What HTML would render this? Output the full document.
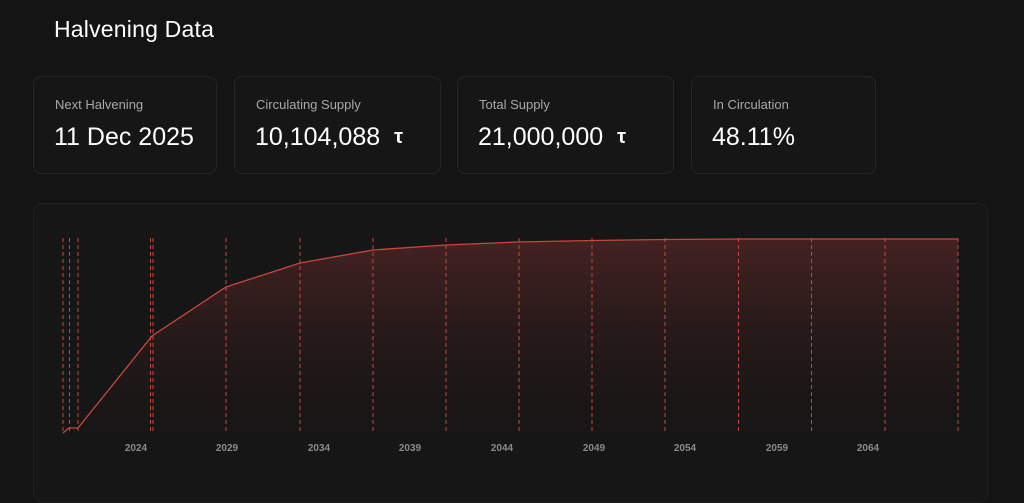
<!DOCTYPE html>
<html><head><style>
body{margin:0;width:1024px;height:482px;background:#141414;font-family:"Liberation Sans",sans-serif;color:#fff;overflow:hidden;position:relative}
h1{position:absolute;left:54px;top:16px;margin:0;font-size:23px;font-weight:400;letter-spacing:0.2px}
.card{position:absolute;top:76px;height:98px;border:1px solid #252525;border-radius:8px;background:#161616;box-sizing:border-box}
.card .l{position:absolute;left:21px;top:20px;font-size:13px;color:#a8a8a8}
.card .v{position:absolute;left:20px;top:46px;font-size:25px;color:#fff}
.t{font-size:20px;margin-left:14px;position:relative;top:-2px;font-weight:bold}
.chart{position:absolute;left:33px;top:203px;width:955px;height:300px;border:1px solid #202020;border-radius:10px;background:#161616;box-sizing:border-box}
</style></head><body>
<h1>Halvening Data</h1>
<div class="card" style="left:33px;width:184px"><div class="l">Next Halvening</div><div class="v">11 Dec 2025</div></div>
<div class="card" style="left:234px;width:207px"><div class="l">Circulating Supply</div><div class="v">10,104,088<span class="t">τ</span></div></div>
<div class="card" style="left:457px;width:217px"><div class="l">Total Supply</div><div class="v">21,000,000<span class="t">τ</span></div></div>
<div class="card" style="left:691px;width:185px"><div class="l">In Circulation</div><div class="v">48.11%</div></div>
<div class="chart"></div>
<svg width="1024" height="482" style="position:absolute;left:0;top:0">
<defs><linearGradient id="g" x1="0" y1="0" x2="0" y2="1"><stop offset="0" stop-color="#4a2323" stop-opacity="0.9"/><stop offset="1" stop-color="#1a1515" stop-opacity="0.3"/></linearGradient></defs>
<path d="M63,433 L69,428 L78,428 L152,336 L226,287 L300,263 L373,250 L446,245 L519,242 L592,240.5 L665,239.5 L738,239 L811,239 L885,239 L958,239 L958,433 Z" fill="url(#g)"/>
<g stroke="#c9463d" stroke-width="1" stroke-dasharray="4,3" fill="none">
<line x1="63" y1="238" x2="63" y2="433"/><line x1="69.5" y1="238" x2="69.5" y2="433"/><line x1="78" y1="238" x2="78" y2="433"/>
<line x1="150.5" y1="238" x2="150.5" y2="433"/><line x1="153" y1="238" x2="153" y2="433"/>
<line x1="226" y1="238" x2="226" y2="433"/><line x1="300" y1="238" x2="300" y2="433"/><line x1="373" y1="238" x2="373" y2="433"/><line x1="446" y1="238" x2="446" y2="433"/><line x1="519" y1="238" x2="519" y2="433"/><line x1="592" y1="238" x2="592" y2="433"/><line x1="665" y1="238" x2="665" y2="433"/><line x1="738.5" y1="238" x2="738.5" y2="433"/><line x1="811.5" y1="238" x2="811.5" y2="433"/><line x1="885" y1="238" x2="885" y2="433"/><line x1="958" y1="238" x2="958" y2="433"/>
</g>
<path d="M63,433 L69,428 L78,428 L152,336 L226,287 L300,263 L373,250 L446,245 L519,242 L592,240.5 L665,239.5 L738,239 L811,239 L885,239 L958,239" stroke="#c9463d" stroke-width="1.3" fill="none"/>
<g fill="#8a8a8a" font-size="10" font-weight="bold" text-anchor="middle" font-family="Liberation Sans">
<text x="136" y="451">2024</text><text x="227" y="451">2029</text><text x="319" y="451">2034</text><text x="410" y="451">2039</text><text x="502" y="451">2044</text><text x="594" y="451">2049</text><text x="685" y="451">2054</text><text x="777" y="451">2059</text><text x="868" y="451">2064</text>
</g>
</svg>
</body></html>
